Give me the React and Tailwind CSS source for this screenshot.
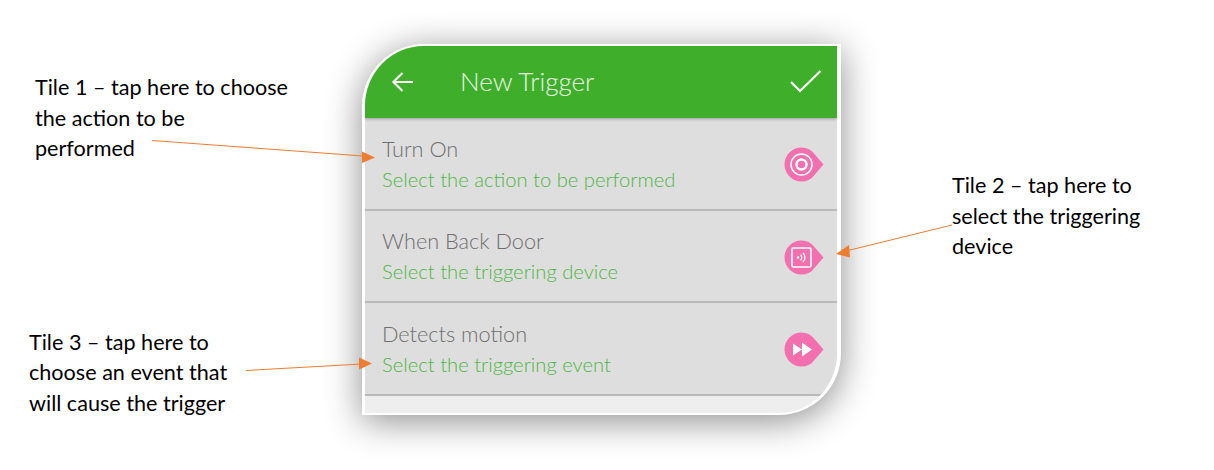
const LATO = { fontFamily: "Lato, sans-serif" };

function Pin({ children }) {
  return (
    <svg width="40" height="35" viewBox="0 0 40 35" className="mt-[3px] shrink-0">
      <path d="M17.5 0.5C22.5 0.5 27 2.5 30 6.5L39.5 17.5L30 28.5C27 32.5 22.5 34.5 17.5 34.5C8.1 34.5 0.5 26.9 0.5 17.5C0.5 8.1 8.1 0.5 17.5 0.5Z" fill="#f36fae" />
      {children}
    </svg>
  );
}

const rows = [
  {
    title: "Turn On",
    sub: "Select the action to be performed",
    icon: (
      <Pin>
        <circle cx="17.5" cy="17.5" r="10.5" fill="none" stroke="#fff" strokeWidth="1.5" />
        <circle cx="17.5" cy="17.5" r="5" fill="none" stroke="#fff" strokeWidth="2.4" />
      </Pin>
    ),
  },
  {
    title: "When Back Door",
    sub: "Select the triggering device",
    icon: (
      <Pin>
        <rect x="8" y="8" width="19" height="19" rx="1.5" fill="none" stroke="#fff" strokeWidth="1.6" />
        <circle cx="14" cy="17.5" r="1.2" fill="#fff" />
        <path d="M16.6 14.6C18 16.4 18 18.6 16.6 20.4M19 12.8C21.4 15.8 21.4 19.2 19 22.2" fill="none" stroke="#fff" strokeWidth="1.3" />
      </Pin>
    ),
  },
  {
    title: "Detects motion",
    sub: "Select the triggering event",
    icon: (
      <Pin>
        <path d="M9 11.5L18 17.5L9 23.5ZM18 10.5L28 17.5L18 24.5Z" fill="#fff" />
      </Pin>
    ),
  },
];

function Note({ lines, className }) {
  return (
    <div className={`text-[21.6px] leading-[30.5px] text-black ${className}`} style={LATO}>
      {lines.map((l) => (
        <div key={l} className="whitespace-nowrap">{l}</div>
      ))}
    </div>
  );
}

export default function App() {
  return (
    <div className="relative flex h-[470px] w-[1214px] overflow-hidden bg-white">
      <div className="flex w-[362px] shrink-0 flex-col">
        <Note className="ml-[35px] mt-[72px]" lines={["Tile 1 – tap here to choose", "the action to be", "performed"]} />
        <Note className="ml-[29px] mt-[163px]" lines={["Tile 3 – tap here to", "choose an event that", "will cause the trigger"]} />
      </div>

      <div className="mt-[44px] h-[371px] w-[479px] shrink-0 overflow-hidden rounded-tl-[62px] rounded-br-[62px] border-2 border-r-[4px] border-l-[3px] border-white bg-[#eeeeee] shadow-[0_6px_36px_rgba(0,0,0,0.45)]">
        <div className="relative z-10 flex h-[72px] items-center bg-[#3fae2a] pl-[26px] pr-[15px] shadow-[0_1px_3px_rgba(0,0,0,0.3)]">
          <svg width="23" height="24" viewBox="0 0 24 24" fill="none" stroke="#fff" strokeWidth="2.2" className="shrink-0">
            <path d="M23 12H2.5M12 2.5L2.5 12L12 21.5" />
          </svg>
          <span className="mb-[2px] ml-[46px] text-[26px] font-light text-[#e9f6e5]" style={LATO}>New Trigger</span>
          <svg width="32" height="24" viewBox="0 0 32 24" fill="none" stroke="#fff" strokeWidth="2.2" className="ml-auto shrink-0">
            <path d="M1 12L10 21L30.5 1" />
          </svg>
        </div>
        {rows.map((r) => (
          <div key={r.title} className="flex h-[92.5px] items-center justify-between border-b-2 border-[#b9b9b9] bg-[#dedede] pl-[17px] pr-[13px]">
            <div className="flex flex-col pt-[1px]" style={LATO}>
              <span className="text-[21.7px] font-light leading-[30px] text-[#6f6f6f]">{r.title}</span>
              <span className="text-[20.2px] font-light leading-[30px] text-[#4fb744]">{r.sub}</span>
            </div>
            {r.icon}
          </div>
        ))}
      </div>

      <Note className="ml-[111px] mt-[170px]" lines={["Tile 2 – tap here to", "select the triggering", "device"]} />

      <svg width="1214" height="470" className="pointer-events-none absolute left-0 top-0" fill="#ed7d31" stroke="none">
        <path d="M152 140.5L363 156" stroke="#ed7d31" strokeWidth="1" />
        <path d="M375 157.5L362 151.5L362 163Z" />
        <path d="M952 225L846 251" stroke="#ed7d31" strokeWidth="1" />
        <path d="M836 254L849 245L850 257.5Z" />
        <path d="M246 370.5L362 364" stroke="#ed7d31" strokeWidth="1" />
        <path d="M372 363.5L359 357.5L359 369.5Z" />
      </svg>
    </div>
  );
}
